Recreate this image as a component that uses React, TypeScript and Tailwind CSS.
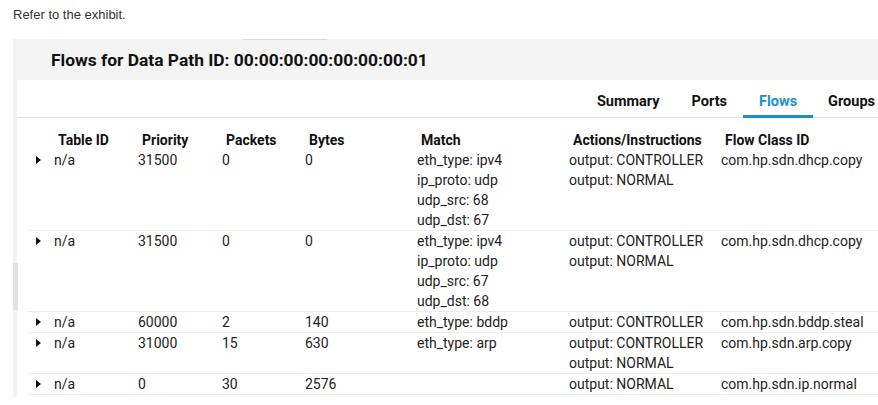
import React from "react";

type Flow = {
  priority: string;
  packets: string;
  bytes: string;
  match: string[];
  actions: string[];
  flowClass: string;
};

const flows: Flow[] = [
  {
    priority: "31500",
    packets: "0",
    bytes: "0",
    match: ["eth_type: ipv4", "ip_proto: udp", "udp_src: 68", "udp_dst: 67"],
    actions: ["output: CONTROLLER", "output: NORMAL"],
    flowClass: "com.hp.sdn.dhcp.copy",
  },
  {
    priority: "31500",
    packets: "0",
    bytes: "0",
    match: ["eth_type: ipv4", "ip_proto: udp", "udp_src: 67", "udp_dst: 68"],
    actions: ["output: CONTROLLER", "output: NORMAL"],
    flowClass: "com.hp.sdn.dhcp.copy",
  },
  {
    priority: "60000",
    packets: "2",
    bytes: "140",
    match: ["eth_type: bddp"],
    actions: ["output: CONTROLLER"],
    flowClass: "com.hp.sdn.bddp.steal",
  },
  {
    priority: "31000",
    packets: "15",
    bytes: "630",
    match: ["eth_type: arp"],
    actions: ["output: CONTROLLER", "output: NORMAL"],
    flowClass: "com.hp.sdn.arp.copy",
  },
  {
    priority: "0",
    packets: "30",
    bytes: "2576",
    match: [],
    actions: ["output: NORMAL"],
    flowClass: "com.hp.sdn.ip.normal",
  },
];

const tabs = ["Summary", "Ports", "Flows", "Groups"];
const headers = ["Table ID", "Priority", "Packets", "Bytes", "Match", "Actions/Instructions", "Flow Class ID"];

const cols = "grid grid-cols-[26px_84px_84px_83px_112px_152px_152px_149px]";

const Caret = () => (
  <svg width="5" height="8" viewBox="0 0 5 8" className="mt-[6px] ml-[8px]">
    <polygon points="0,0 5,4 0,8" fill="#111" />
  </svg>
);

const App: React.FC = () => {
  return (
    <div className="w-[878px] h-[405px] overflow-hidden bg-white">
      <p className="pl-[13px] pt-[7px] text-[13px] leading-[16px] text-[#333] font-['Liberation_Sans',Arial,sans-serif]">
        Refer to the exhibit.
      </p>
      <div className="mt-[16px] ml-[13px] flex font-['Roboto',sans-serif]">
        <div className="w-[4px] h-[359px] bg-[#f3f3f3] flex flex-col">
          <div className="mt-[224px] h-[47px] w-[5px] bg-[#e2e2e2]" />
        </div>
        <div className="flex-1 min-w-0">
          <div className="h-[41px] bg-[#f4f4f4]">
            <div className="ml-[226px] w-[84px] h-px bg-[#dcdcdc]" />
            <h1 className="pl-[34px] pt-[8px] text-[17.4px] leading-[24px] font-bold text-[#111]">
              Flows for Data Path ID: 00:00:00:00:00:00:00:01
            </h1>
          </div>
          <div className="h-[38px] border-b border-[#e4e4e4] flex justify-end items-end">
            {tabs.map((t, i) => (
              <div
                key={t}
                className={`${i === tabs.length - 1 ? "pl-[15px] pr-[3px]" : "px-[16px]"} pb-[3px] -mb-px border-b-[3px] text-[14.5px] leading-[20px] font-bold ${
                  t === "Flows" ? "text-[#1a8fd0] border-[#1a8fd0]" : "text-[#111] border-transparent"
                }`}
              >
                {t}
              </div>
            ))}
          </div>
          <div className="pl-[11px] text-[14px] leading-[20px] text-[#222]">
            <div className={`${cols} pt-[12px]`}>
              <div />
              {headers.map((h) => (
                <div key={h} className="pl-[4px] font-bold text-[#111] whitespace-nowrap">
                  {h}
                </div>
              ))}
            </div>
            {flows.map((f, i) => (
              <div key={i} className={`${cols} border-b border-[#ececec] whitespace-nowrap`}>
                <Caret />
                <div>n/a</div>
                <div>{f.priority}</div>
                <div>{f.packets}</div>
                <div>{f.bytes}</div>
                <div className="flex flex-col">
                  {f.match.map((m) => (
                    <span key={m}>{m}</span>
                  ))}
                </div>
                <div className="flex flex-col">
                  {f.actions.map((a) => (
                    <span key={a}>{a}</span>
                  ))}
                </div>
                <div>{f.flowClass}</div>
              </div>
            ))}
          </div>
        </div>
      </div>
    </div>
  );
};

export default App;
